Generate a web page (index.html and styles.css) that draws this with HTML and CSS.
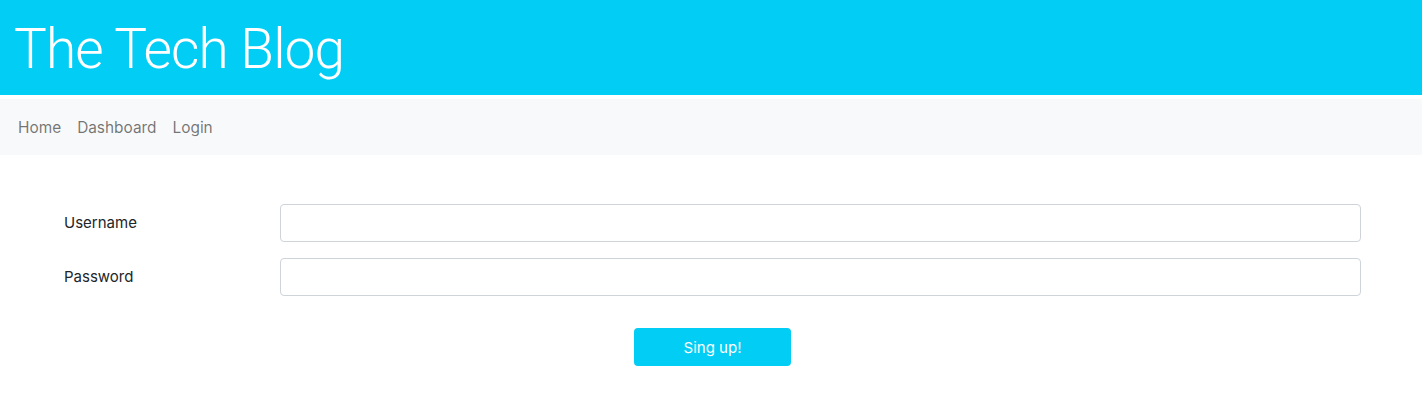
FILE: index.html
```html
<!DOCTYPE html>
<html lang="en">
<head>
<meta charset="utf-8">
<title>The Tech Blog</title>
<link rel="stylesheet" href="styles.css">
</head>
<body>
<header class="site-header">
  <h1 class="site-title">The Tech Blog</h1>
</header>
<nav class="navbar">
  <a class="nav-link" href="#">Home</a>
  <a class="nav-link" href="#">Dashboard</a>
  <a class="nav-link" href="#">Login</a>
</nav>
<main class="content">
  <form class="signup-form">
    <div class="form-row">
      <label class="form-label" for="username">Username</label>
      <input class="form-input" id="username" type="text">
    </div>
    <div class="form-row">
      <label class="form-label" for="password">Password</label>
      <input class="form-input" id="password" type="password">
    </div>
    <div class="form-actions">
      <button class="btn-signup" type="button">Sing up!</button>
    </div>
  </form>
</main>
</body>
</html>
```
FILE: styles.css
```css
* { box-sizing: border-box; }
body {
  margin: 0;
  font-family: Inter, "Liberation Sans", sans-serif;
  font-size: 16px;
  line-height: 1.5;
  color: #212529;
  background: #fff;
}
.site-header {
  background: #02cdf5;
  height: 95px;
  display: flex;
  align-items: center;
  padding-left: 14px;
  border-bottom: 4px solid #fff;
  box-sizing: content-box;
}
.site-title {
  margin: 0;
  color: #fff;
  font-family: Roboto, Inter, sans-serif;
  font-size: 55px;
  font-weight: 300;
  line-height: 1.2;
  letter-spacing: -0.9px;
  padding-top: 2px;
}
.navbar {
  background: #f8f9fa;
  height: 56px;
  display: flex;
  align-items: center;
  padding: 2px 10px 0;
}
.nav-link {
  color: rgba(0,0,0,0.55);
  text-decoration: none;
  padding: 8px;
  font-size: 15.4px;
}
.content {
  padding: 49px 61px 0 64px;
}
.form-row {
  display: grid;
  grid-template-columns: 216px 1fr;
  align-items: center;
  margin-bottom: 16px;
}
.form-label {
  font-size: 15px;
  color: #212529;
  padding-top: 1px;
}
.form-input {
  height: 38px;
  border: 1px solid #ced4da;
  border-radius: 4px;
  font: inherit;
  padding: 6px 12px;
  background: #fff;
}
.form-actions {
  display: flex;
  justify-content: center;
  padding-top: 16px;
}
.btn-signup {
  width: 157px;
  height: 38px;
  background: #02cdf5;
  color: #fff;
  border: none;
  border-radius: 4px;
  font-family: inherit;
  font-size: 15px;
}
```
